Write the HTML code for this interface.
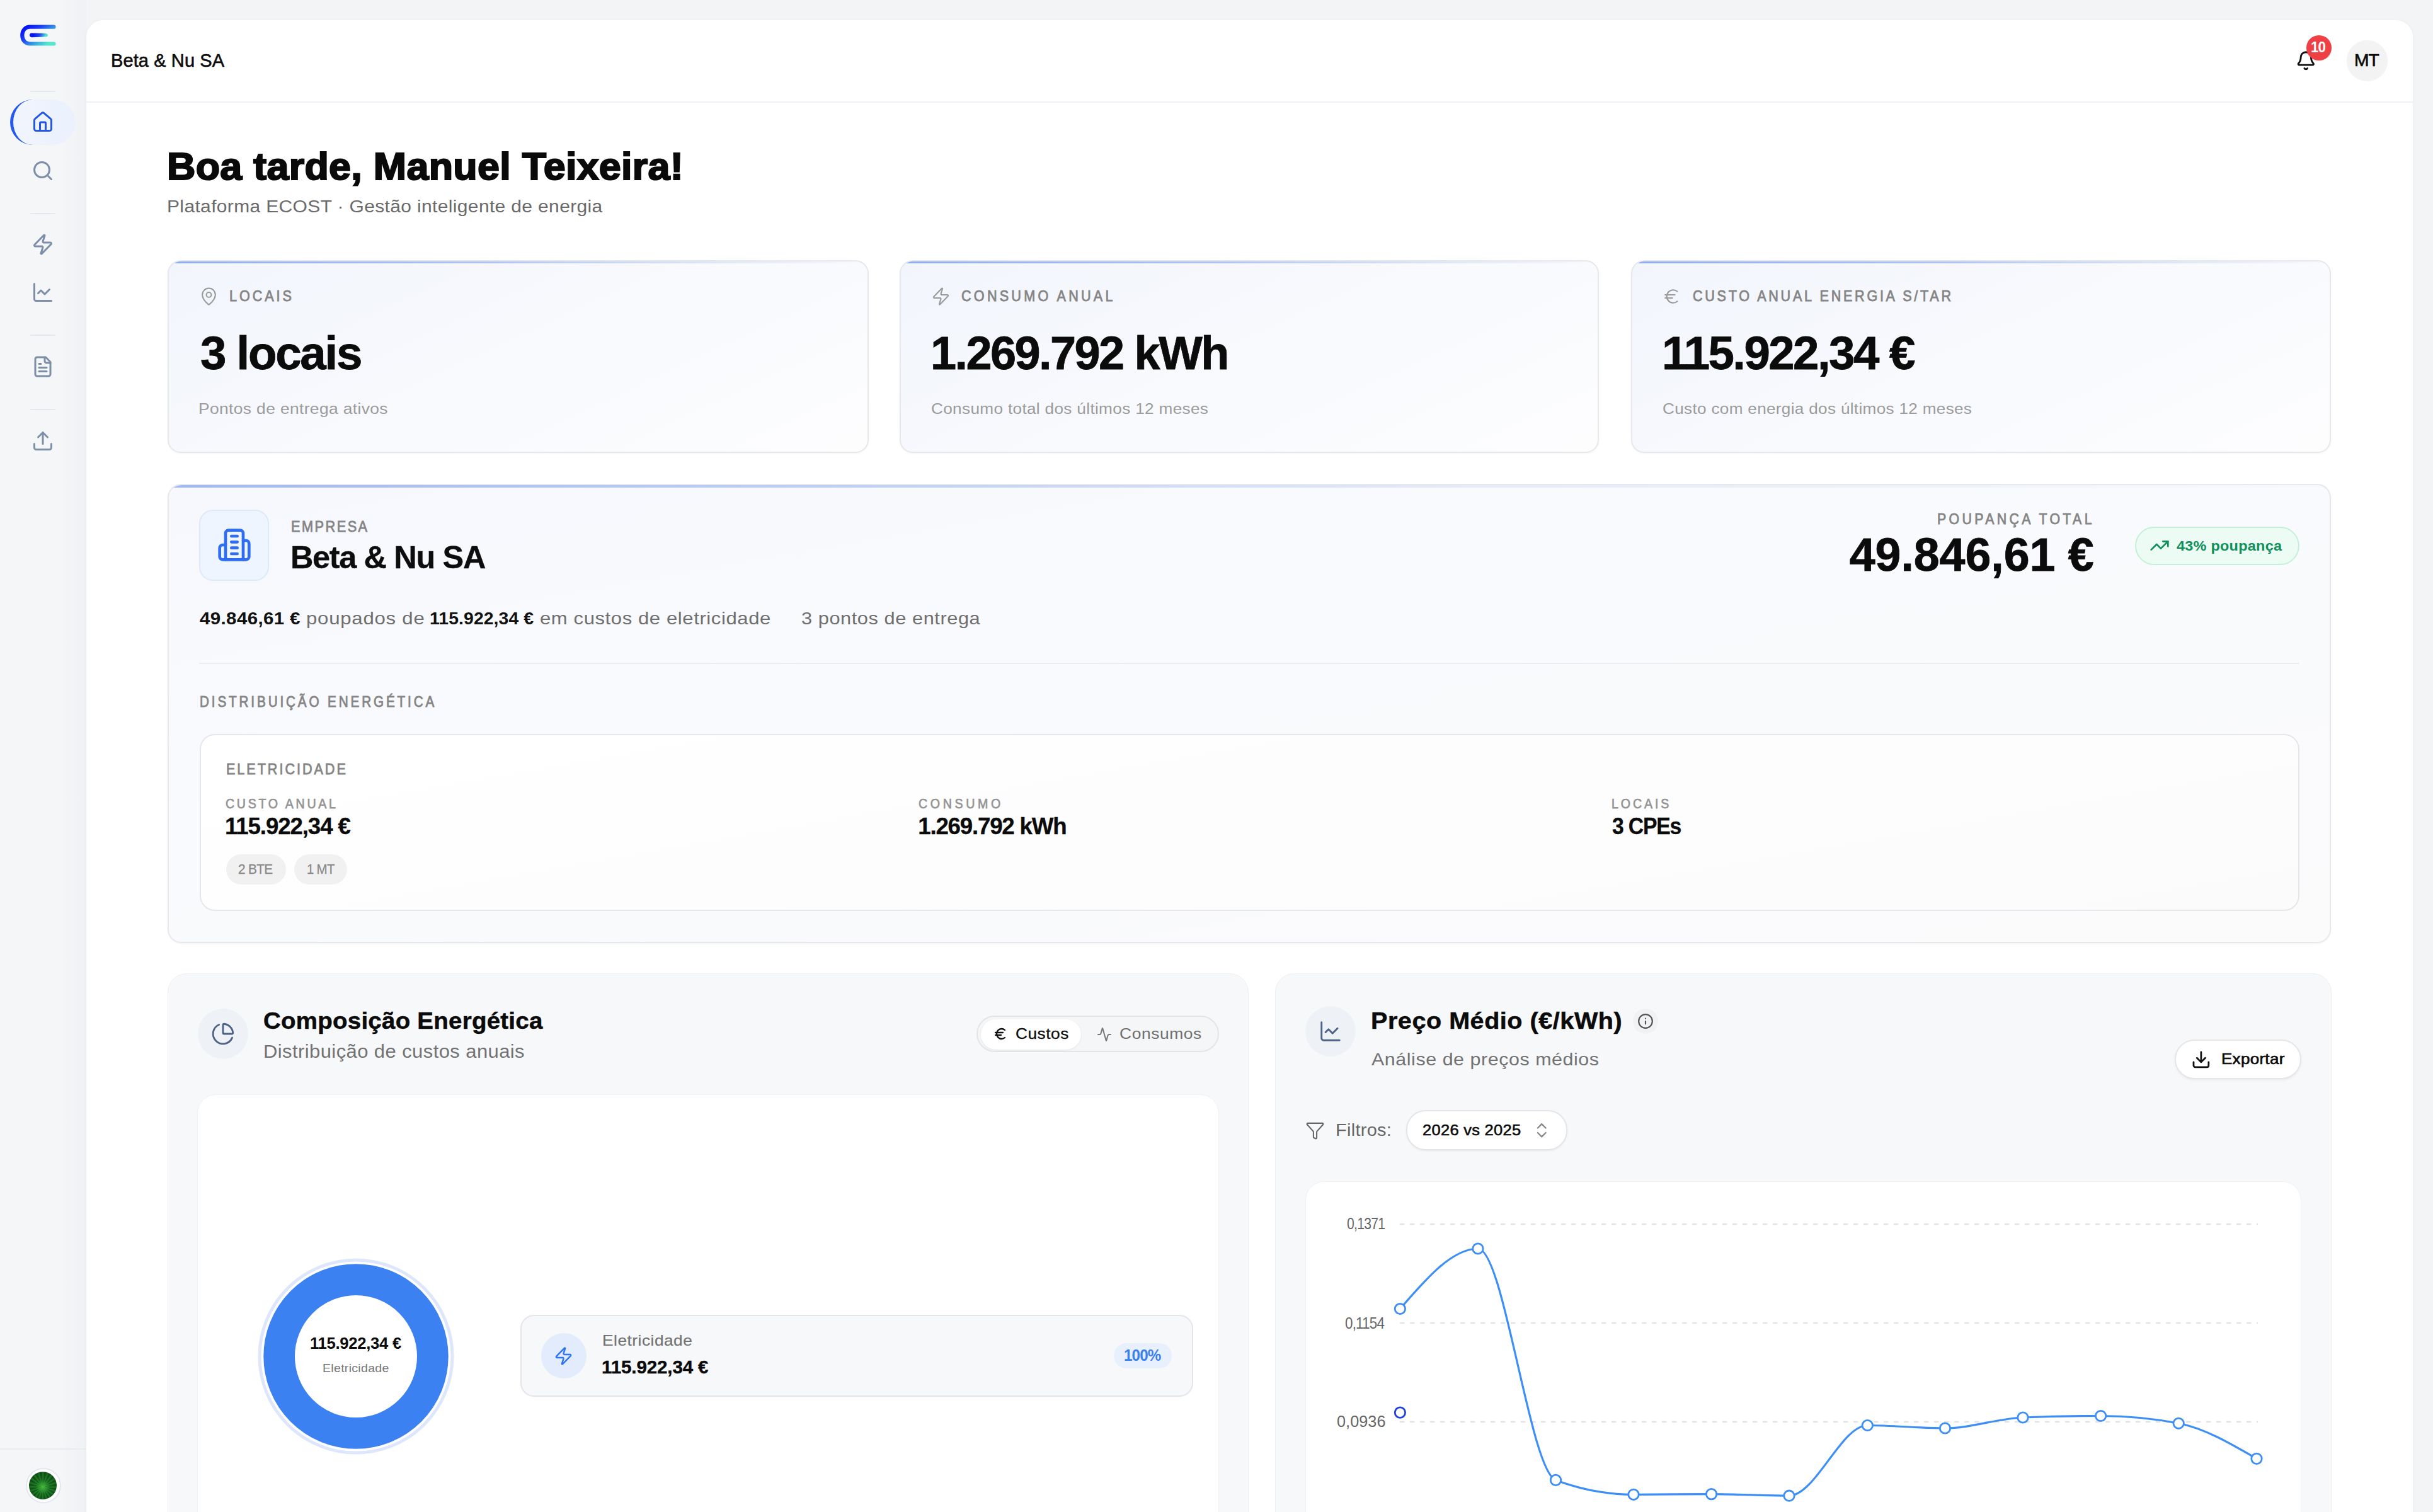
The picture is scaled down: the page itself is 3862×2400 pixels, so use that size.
<!DOCTYPE html>
<html><head><meta charset="utf-8"><title>ECOST</title>
<style>
@media (min-width:1900px) and (max-width:1960px){html{zoom:0.5;}}
html,body{margin:0;padding:0;}
body{width:3862px;height:2400px;overflow:hidden;background:#f3f4f6;font-family:"Liberation Sans",sans-serif;position:relative;}
.b{position:absolute;}
.ic{position:absolute;overflow:visible;}
.t{position:absolute;white-space:nowrap;}
</style></head><body>
<div class="b" style="left:0.0px;top:0.0px;width:136.5px;height:2400.0px;background:linear-gradient(90deg,#f5f6f8 0%,#f5f6f8 70%,#f0f1f4 100%);"></div>
<svg class="ic" style="left:0;top:0;width:136px;height:100px" viewBox="0 0 136 100">
<defs><linearGradient id="lg1" gradientUnits="userSpaceOnUse" x1="45" y1="40" x2="70" y2="74"><stop offset="0" stop-color="#0514f8"/><stop offset="0.3" stop-color="#1a3af6"/><stop offset="0.7" stop-color="#3aa4e2"/><stop offset="1" stop-color="#55e6d0"/></linearGradient>
<linearGradient id="lg2" gradientUnits="userSpaceOnUse" x1="55" y1="52" x2="70" y2="61"><stop offset="0" stop-color="#0514f8"/><stop offset="0.5" stop-color="#1f45f4"/><stop offset="1" stop-color="#55e6d0"/></linearGradient></defs>
<path d="M85.5 42.7 H48 C39 42.7 35.3 49.5 35.3 56 C35.3 62.5 39 69.5 48 69.5 H85.5" fill="none" stroke="url(#lg1)" stroke-width="6.2" stroke-linecap="round"/>
<path d="M50 52.6 L73 53.2 C77 53.6 77 58.2 73 58.6 L50 59.2 C46 59.2 46 52.6 50 52.6 Z" fill="url(#lg2)"/>
</svg>
<div class="b" style="left:48.0px;top:144.0px;width:40.0px;height:2.0px;background:#e4e8ee;border-radius:1px;"></div>
<div class="b" style="left:48.0px;top:337.6px;width:40.0px;height:2.0px;background:#e4e8ee;border-radius:1px;"></div>
<div class="b" style="left:48.0px;top:531.0px;width:40.0px;height:2.0px;background:#e4e8ee;border-radius:1px;"></div>
<div class="b" style="left:48.0px;top:649.0px;width:40.0px;height:2.0px;background:#e4e8ee;border-radius:1px;"></div>
<div class="b" style="left:16.0px;top:158.0px;width:104.0px;height:72.0px;background:linear-gradient(90deg,#f1f5fd,#eaf1fd);border-radius:36px;"></div>
<div class="b" style="left:16px;top:158px;width:72px;height:72px;border-radius:50%;border-left:5px solid #2458f0;box-sizing:border-box;clip-path:inset(0 50% 0 0);"></div>
<svg class="ic" style="left:50.0px;top:176.0px;width:36.0px;height:36.0px;" viewBox="0 0 24 24" fill="none" stroke="#2456e8" stroke-width="2" stroke-linecap="round" stroke-linejoin="round"><path d="M15 21v-8a1 1 0 0 0-1-1h-4a1 1 0 0 0-1 1v8"/><path d="M3 10a2 2 0 0 1 .709-1.528l7-5.999a2 2 0 0 1 2.582 0l7 5.999A2 2 0 0 1 21 10v9a2 2 0 0 1-2 2H5a2 2 0 0 1-2-2z"/></svg>
<svg class="ic" style="left:50.0px;top:252.5px;width:36.0px;height:36.0px;" viewBox="0 0 24 24" fill="none" stroke="#7d8ea8" stroke-width="2" stroke-linecap="round" stroke-linejoin="round"><circle cx="11" cy="11" r="8"/><path d="m21 21-4.3-4.3"/></svg>
<svg class="ic" style="left:50.0px;top:370.0px;width:36.0px;height:36.0px;" viewBox="0 0 24 24" fill="none" stroke="#7d8ea8" stroke-width="2" stroke-linecap="round" stroke-linejoin="round"><path d="M4 14a1 1 0 0 1-.78-1.63l9.9-10.2a.5.5 0 0 1 .86.46l-1.92 6.02A1 1 0 0 0 13 10h7a1 1 0 0 1 .78 1.63l-9.9 10.2a.5.5 0 0 1-.86-.46l1.92-6.02A1 1 0 0 0 11 14z"/></svg>
<svg class="ic" style="left:50.0px;top:445.5px;width:36.0px;height:36.0px;" viewBox="0 0 24 24" fill="none" stroke="#7d8ea8" stroke-width="2" stroke-linecap="round" stroke-linejoin="round"><path d="M3 3v16a2 2 0 0 0 2 2h16"/><path d="m19 9-5 5-4-4-3 3"/></svg>
<svg class="ic" style="left:50.0px;top:564.0px;width:36.0px;height:36.0px;" viewBox="0 0 24 24" fill="none" stroke="#7d8ea8" stroke-width="2" stroke-linecap="round" stroke-linejoin="round"><path d="M15 2H6a2 2 0 0 0-2 2v16a2 2 0 0 0 2 2h12a2 2 0 0 0 2-2V7Z"/><path d="M14 2v4a2 2 0 0 0 2 2h4"/><path d="M10 9H8"/><path d="M16 13H8"/><path d="M16 17H8"/></svg>
<svg class="ic" style="left:50.0px;top:682.0px;width:36.0px;height:36.0px;" viewBox="0 0 24 24" fill="none" stroke="#7d8ea8" stroke-width="2" stroke-linecap="round" stroke-linejoin="round"><path d="M21 15v4a2 2 0 0 1-2 2H5a2 2 0 0 1-2-2v-4"/><polyline points="17 8 12 3 7 8"/><line x1="12" x2="12" y1="3" y2="15"/></svg>
<div class="b" style="left:0.0px;top:2299.0px;width:136.5px;height:2.0px;background:#e8ebf0;"></div>
<div class="b" style="left:40.5px;top:2330px;width:56px;height:56px;border-radius:50%;background:#fff;border:2px solid #e3e8f0;box-sizing:border-box;"></div>
<div class="b" style="left:46.4px;top:2335.8px;width:44px;height:44px;border-radius:50%;background:radial-gradient(circle at 50% 55%,rgba(80,210,70,0.8) 0%,rgba(30,130,40,0.45) 35%,rgba(5,40,10,0.5) 100%),repeating-conic-gradient(from 10deg at 50% 55%,#0a3d10 0deg,#24882a 9deg,#072c0b 18deg),#0b4a12;"></div>
<div class="b" style="left:136.5px;top:32.0px;width:3693.5px;height:2428.0px;background:#fff;border-radius:27px;box-shadow:0 0 6px rgba(0,0,0,0.03);"></div>
<div class="b" style="left:136.5px;top:160.5px;width:3693.5px;height:2.0px;background:#eef2f8;"></div>
<div class="t " style="left:176.47px;top:81.95px;font-size:28.60px;line-height:28.60px;font-weight:400;color:#0d0d0d;letter-spacing:0.098px;-webkit-text-stroke:0.6px #0d0d0d;transform:scaleX(1.0146);transform-origin:0 0;">Beta &amp; Nu SA</div>
<svg class="ic" style="left:3644.4px;top:79.7px;width:32.6px;height:32.6px;" viewBox="0 0 24 24" fill="none" stroke="#111" stroke-width="2.1" stroke-linecap="round" stroke-linejoin="round"><path d="M10.268 21a2 2 0 0 0 3.464 0"/><path d="M3.262 15.326A1 1 0 0 0 4 17h16a1 1 0 0 0 .74-1.673C19.41 13.956 18 12.499 18 8A6 6 0 0 0 6 8c0 4.499-1.411 5.956-2.738 7.326"/></svg>
<div class="b" style="left:3660.7px;top:56.1px;width:40.2px;height:40.2px;border-radius:50%;background:#ef4046;box-shadow:0 1px 3px rgba(0,0,0,0.08);"></div>
<div class="t " style="left:3668.19px;top:63.25px;font-size:24.50px;line-height:24.50px;font-weight:700;color:#fff;letter-spacing:-0.858px;transform:scaleX(0.9084);transform-origin:0 0;">10</div>
<div class="b" style="left:3725.4px;top:64.4px;width:64.2px;height:64.2px;border-radius:50%;background:#f3f3f3;"></div>
<div class="t " style="left:3736.70px;top:81.35px;font-size:28.30px;line-height:28.30px;font-weight:400;color:#0d0d0d;letter-spacing:-0.991px;-webkit-text-stroke:0.7px #0d0d0d;transform:scaleX(0.9978);transform-origin:0 0;">MT</div>
<div class="t " style="left:265.31px;top:232.75px;font-size:61.50px;line-height:61.50px;font-weight:700;color:#0a0a0a;letter-spacing:0.274px;-webkit-text-stroke:2.2px #0a0a0a;transform:scaleX(1.0217);transform-origin:0 0;">Boa tarde, Manuel Teixeira!</div>
<div class="t " style="left:265.17px;top:313.30px;font-size:28.20px;line-height:28.20px;font-weight:400;color:#6a6a6a;letter-spacing:0.343px;transform:scaleX(1.0632);transform-origin:0 0;">Plataforma ECOST · Gestão inteligente de energia</div>
<div class="b" style="left:266px;top:413px;width:1113px;height:306px;background:linear-gradient(155deg,#f2f5fc 0%,#f7f9fd 45%,#fdfdfe 100%);border:2px solid #e7e8eb;border-radius:21px;box-sizing:border-box;box-shadow:0 1px 3px rgba(0,0,0,0.05);overflow:hidden;"><div style="position:absolute;left:0;right:0;top:0;height:3.2px;background:linear-gradient(90deg,#8eadf1 0%,#aec3f3 45%,rgba(215,225,247,0.7) 80%,rgba(240,244,252,0) 100%);"></div></div>
<svg class="ic" style="left:316.3px;top:454.7px;width:31.0px;height:31.0px;" viewBox="0 0 24 24" fill="none" stroke="#9a9a9a" stroke-width="1.6" stroke-linecap="round" stroke-linejoin="round"><path d="M20 10c0 4.993-5.539 10.193-7.399 11.799a1 1 0 0 1-1.202 0C9.539 20.193 4 14.993 4 10a8 8 0 0 1 16 0"/><circle cx="12" cy="10" r="3"/></svg>
<div class="t " style="left:364.40px;top:457.90px;font-size:24.00px;line-height:24.00px;font-weight:400;color:#858585;letter-spacing:4.351px;-webkit-text-stroke:0.85px #858585;transform:scaleX(0.9000);transform-origin:0 0;">LOCAIS</div>
<div class="t " style="left:317.90px;top:524.05px;font-size:74.50px;line-height:74.50px;font-weight:700;color:#0b0b0b;letter-spacing:-2.272px;-webkit-text-stroke:0.8px #0b0b0b;">3 locais</div>
<div class="t " style="left:315.26px;top:636.55px;font-size:24.70px;line-height:24.70px;font-weight:400;color:#9b9b9b;letter-spacing:0.332px;transform:scaleX(1.0704);transform-origin:0 0;">Pontos de entrega ativos</div>
<div class="b" style="left:1428px;top:413px;width:1110px;height:306px;background:linear-gradient(155deg,#f2f5fc 0%,#f7f9fd 45%,#fdfdfe 100%);border:2px solid #e7e8eb;border-radius:21px;box-sizing:border-box;box-shadow:0 1px 3px rgba(0,0,0,0.05);overflow:hidden;"><div style="position:absolute;left:0;right:0;top:0;height:3.2px;background:linear-gradient(90deg,#8eadf1 0%,#aec3f3 45%,rgba(215,225,247,0.7) 80%,rgba(240,244,252,0) 100%);"></div></div>
<svg class="ic" style="left:1477.5px;top:454.7px;width:31.0px;height:31.0px;" viewBox="0 0 24 24" fill="none" stroke="#9a9a9a" stroke-width="1.6" stroke-linecap="round" stroke-linejoin="round"><path d="M4 14a1 1 0 0 1-.78-1.63l9.9-10.2a.5.5 0 0 1 .86.46l-1.92 6.02A1 1 0 0 0 13 10h7a1 1 0 0 1 .78 1.63l-9.9 10.2a.5.5 0 0 1-.86-.46l1.92-6.02A1 1 0 0 0 11 14z"/></svg>
<div class="t " style="left:1526.40px;top:457.90px;font-size:24.00px;line-height:24.00px;font-weight:400;color:#858585;letter-spacing:4.712px;-webkit-text-stroke:0.85px #858585;transform:scaleX(0.9000);transform-origin:0 0;">CONSUMO ANUAL</div>
<div class="t " style="left:1476.93px;top:524.05px;font-size:74.50px;line-height:74.50px;font-weight:700;color:#0b0b0b;letter-spacing:-2.608px;-webkit-text-stroke:0.8px #0b0b0b;transform:scaleX(0.9924);transform-origin:0 0;">1.269.792 kWh</div>
<div class="t " style="left:1478.34px;top:636.55px;font-size:24.70px;line-height:24.70px;font-weight:400;color:#9b9b9b;letter-spacing:0.300px;transform:scaleX(1.0608);transform-origin:0 0;">Consumo total dos últimos 12 meses</div>
<div class="b" style="left:2589px;top:413px;width:1111px;height:306px;background:linear-gradient(155deg,#f2f5fc 0%,#f7f9fd 45%,#fdfdfe 100%);border:2px solid #e7e8eb;border-radius:21px;box-sizing:border-box;box-shadow:0 1px 3px rgba(0,0,0,0.05);overflow:hidden;"><div style="position:absolute;left:0;right:0;top:0;height:3.2px;background:linear-gradient(90deg,#8eadf1 0%,#aec3f3 45%,rgba(215,225,247,0.7) 80%,rgba(240,244,252,0) 100%);"></div></div>
<svg class="ic" style="left:2637.5px;top:454.7px;width:31.0px;height:31.0px;" viewBox="0 0 24 24" fill="none" stroke="#9a9a9a" stroke-width="1.6" stroke-linecap="round" stroke-linejoin="round"><path d="M4 10h12"/><path d="M4 14h9"/><path d="M19 6a7.7 7.7 0 0 0-5.2-2A7.9 7.9 0 0 0 6 12c0 4.4 3.5 8 7.8 8 2 0 3.8-.8 5.2-2"/></svg>
<div class="t " style="left:2687.40px;top:457.90px;font-size:24.00px;line-height:24.00px;font-weight:400;color:#858585;letter-spacing:4.108px;-webkit-text-stroke:0.85px #858585;transform:scaleX(0.9000);transform-origin:0 0;">CUSTO ANUAL ENERGIA S/TAR</div>
<div class="t " style="left:2637.90px;top:524.05px;font-size:74.50px;line-height:74.50px;font-weight:700;color:#0b0b0b;letter-spacing:-2.587px;-webkit-text-stroke:0.8px #0b0b0b;">115.922,34 €</div>
<div class="t " style="left:2639.34px;top:636.55px;font-size:24.70px;line-height:24.70px;font-weight:400;color:#9b9b9b;letter-spacing:0.291px;transform:scaleX(1.0590);transform-origin:0 0;">Custo com energia dos últimos 12 meses</div>
<div class="b" style="left:266px;top:768px;width:3434px;height:728.5px;background:linear-gradient(170deg,#f6f8fd 0%,#f9fafd 40%,#fbfbfc 100%);border:2px solid #e7e8eb;border-radius:22px;box-sizing:border-box;box-shadow:0 1px 3px rgba(0,0,0,0.05);overflow:hidden;"><div style="position:absolute;left:0;right:0;top:0;height:4px;background:linear-gradient(90deg,#a0baf2 0%,#c3d3f5 35%,rgba(220,229,248,0.7) 60%,rgba(240,244,252,0.2) 100%);"></div></div>
<div class="b" style="left:316.0px;top:809.0px;width:111.0px;height:112.5px;background:#eef5fe;border:2px solid #dde9fb;border-radius:22px;box-sizing:border-box;"></div>
<svg class="ic" style="left:343.5px;top:837.0px;width:56.0px;height:56.0px;" viewBox="0 0 24 24" fill="none" stroke="#2f6df2" stroke-width="2" stroke-linecap="round" stroke-linejoin="round"><path d="M6 22V4a2 2 0 0 1 2-2h8a2 2 0 0 1 2 2v18Z"/><path d="M6 12H4a2 2 0 0 0-2 2v6a2 2 0 0 0 2 2h2"/><path d="M18 9h2a2 2 0 0 1 2 2v9a2 2 0 0 1-2 2h-2"/><path d="M10 6h4"/><path d="M10 10h4"/><path d="M10 14h4"/><path d="M10 18h4"/></svg>
<div class="t " style="left:461.50px;top:823.80px;font-size:24.20px;line-height:24.20px;font-weight:400;color:#858585;letter-spacing:2.716px;-webkit-text-stroke:0.85px #858585;transform:scaleX(0.9000);transform-origin:0 0;">EMPRESA</div>
<div class="t " style="left:460.90px;top:859.75px;font-size:50.50px;line-height:50.50px;font-weight:700;color:#0d0d0d;letter-spacing:-1.365px;-webkit-text-stroke:0.3px #0d0d0d;">Beta &amp; Nu SA</div>
<div class="t " style="left:316.90px;top:967.70px;font-size:28.00px;line-height:28.00px;font-weight:700;color:#111;letter-spacing:0.331px;transform:scaleX(1.0550);transform-origin:0 0;">49.846,61 €</div>
<div class="t " style="left:486.39px;top:967.70px;font-size:28.00px;line-height:28.00px;font-weight:400;color:#6f6f6f;letter-spacing:0.692px;transform:scaleX(1.1119);transform-origin:0 0;">poupados de</div>
<div class="t " style="left:682.49px;top:967.70px;font-size:28.00px;line-height:28.00px;font-weight:700;color:#111;letter-spacing:0.084px;transform:scaleX(1.0136);transform-origin:0 0;">115.922,34 €</div>
<div class="t " style="left:857.39px;top:967.70px;font-size:28.00px;line-height:28.00px;font-weight:400;color:#6f6f6f;letter-spacing:0.548px;transform:scaleX(1.1076);transform-origin:0 0;">em custos de eletricidade</div>
<div class="t " style="left:1272.40px;top:967.70px;font-size:28.00px;line-height:28.00px;font-weight:400;color:#6f6f6f;letter-spacing:0.524px;transform:scaleX(1.0971);transform-origin:0 0;">3 pontos de entrega</div>
<div class="t " style="left:3075.10px;top:812.55px;font-size:23.70px;line-height:23.70px;font-weight:400;color:#858585;letter-spacing:4.815px;-webkit-text-stroke:0.85px #858585;transform:scaleX(0.9000);transform-origin:0 0;">POUPANÇA TOTAL</div>
<div class="t " style="left:2935.70px;top:844.30px;font-size:73.60px;line-height:73.60px;font-weight:700;color:#0b0b0b;letter-spacing:-0.085px;-webkit-text-stroke:0.8px #0b0b0b;">49.846,61 €</div>
<div class="b" style="left:3389.0px;top:836.0px;width:261.0px;height:61.0px;background:#ecfbf3;border:2px solid #c5f0d8;border-radius:31px;box-sizing:border-box;"></div>
<svg class="ic" style="left:3412.3px;top:850.3px;width:32.0px;height:32.0px;" viewBox="0 0 24 24" fill="none" stroke="#0f8f5a" stroke-width="2" stroke-linecap="round" stroke-linejoin="round"><polyline points="22 7 13.5 15.5 8.5 10.5 2 17"/><polyline points="16 7 22 7 22 13"/></svg>
<div class="t " style="left:3455.40px;top:855.55px;font-size:22.50px;line-height:22.50px;font-weight:700;color:#0f8f5a;letter-spacing:0.248px;transform:scaleX(1.0419);transform-origin:0 0;">43% poupança</div>
<div class="b" style="left:316.0px;top:1052.0px;width:3334.0px;height:2.0px;background:#ebedf0;"></div>
<div class="t " style="left:316.60px;top:1102.50px;font-size:23.00px;line-height:23.00px;font-weight:400;color:#858585;letter-spacing:4.281px;-webkit-text-stroke:0.85px #858585;transform:scaleX(0.9000);transform-origin:0 0;">DISTRIBUIÇÃO ENERGÉTICA</div>
<div class="b" style="left:316.6px;top:1165.0px;width:3333.4px;height:281.0px;background:linear-gradient(170deg,#ffffff 0%,#fbfbfc 100%);border:2px solid #e6e7ea;border-radius:24px;box-sizing:border-box;"></div>
<div class="t " style="left:358.70px;top:1208.50px;font-size:24.00px;line-height:24.00px;font-weight:400;color:#858585;letter-spacing:3.290px;-webkit-text-stroke:0.85px #858585;transform:scaleX(0.9000);transform-origin:0 0;">ELETRICIDADE</div>
<div class="t " style="left:358.10px;top:1264.90px;font-size:21.80px;line-height:21.80px;font-weight:400;color:#949494;letter-spacing:4.093px;-webkit-text-stroke:0.75px #949494;transform:scaleX(0.9000);transform-origin:0 0;">CUSTO ANUAL</div>
<div class="t " style="left:357.00px;top:1294.35px;font-size:36.70px;line-height:36.70px;font-weight:700;color:#0b0b0b;letter-spacing:-1.117px;-webkit-text-stroke:0.3px #0b0b0b;">115.922,34 €</div>
<div class="t " style="left:1458.30px;top:1264.90px;font-size:21.80px;line-height:21.80px;font-weight:400;color:#949494;letter-spacing:5.151px;-webkit-text-stroke:0.75px #949494;transform:scaleX(0.9000);transform-origin:0 0;">CONSUMO</div>
<div class="t " style="left:1457.20px;top:1294.35px;font-size:36.70px;line-height:36.70px;font-weight:700;color:#0b0b0b;letter-spacing:-1.203px;-webkit-text-stroke:0.3px #0b0b0b;">1.269.792 kWh</div>
<div class="t " style="left:2557.60px;top:1264.90px;font-size:21.80px;line-height:21.80px;font-weight:400;color:#949494;letter-spacing:4.318px;-webkit-text-stroke:0.75px #949494;transform:scaleX(0.9000);transform-origin:0 0;">LOCAIS</div>
<div class="t " style="left:2558.50px;top:1294.35px;font-size:36.70px;line-height:36.70px;font-weight:700;color:#0b0b0b;letter-spacing:-1.285px;-webkit-text-stroke:0.3px #0b0b0b;transform:scaleX(0.9190);transform-origin:0 0;">3 CPEs</div>
<div class="b" style="left:359.0px;top:1356.0px;width:94.5px;height:48.0px;background:#f1f1f2;border-radius:24px;"></div>
<div class="b" style="left:467.0px;top:1356.0px;width:84.3px;height:48.0px;background:#f1f1f2;border-radius:24px;"></div>
<div class="t " style="left:377.85px;top:1368.95px;font-size:22.10px;line-height:22.10px;font-weight:400;color:#8a8a8a;letter-spacing:-0.774px;-webkit-text-stroke:0.3px #8a8a8a;transform:scaleX(0.9458);transform-origin:0 0;">2 BTE</div>
<div class="t " style="left:486.58px;top:1368.95px;font-size:22.10px;line-height:22.10px;font-weight:400;color:#8a8a8a;letter-spacing:-0.774px;-webkit-text-stroke:0.3px #8a8a8a;transform:scaleX(0.9245);transform-origin:0 0;">1 MT</div>
<div class="b" style="left:266.0px;top:1545.0px;width:1716.4px;height:955.0px;background:#f7f8fa;border:1.5px solid #edeff2;box-sizing:border-box;border-radius:30px;"></div>
<div class="b" style="left:314px;top:1601px;width:80px;height:80px;border-radius:50%;background:#eef2f7;"></div>
<svg class="ic" style="left:335.0px;top:1622.0px;width:38.0px;height:38.0px;" viewBox="0 0 24 24" fill="none" stroke="#4c6286" stroke-width="1.8" stroke-linecap="round" stroke-linejoin="round"><path d="M21 12c.552 0 1.005-.449.95-.998a10 10 0 0 0-8.953-8.951c-.55-.055-.998.398-.998.95v8a1 1 0 0 0 1 1z"/><path d="M21.21 15.89A10 10 0 1 1 8 2.83"/></svg>
<div class="t " style="left:418.17px;top:1601.55px;font-size:37.50px;line-height:37.50px;font-weight:700;color:#0b0b0b;letter-spacing:0.236px;-webkit-text-stroke:0.5px #0b0b0b;transform:scaleX(1.0265);transform-origin:0 0;">Composição Energética</div>
<div class="t " style="left:418.35px;top:1654.85px;font-size:28.90px;line-height:28.90px;font-weight:400;color:#727272;letter-spacing:0.386px;transform:scaleX(1.0725);transform-origin:0 0;">Distribuição de custos anuais</div>
<div class="b" style="left:1550.0px;top:1612.0px;width:384.6px;height:58.4px;background:#f5f6f8;border:2px solid #e4e5e8;border-radius:30px;box-sizing:border-box;"></div>
<div class="b" style="left:1556.5px;top:1617.6px;width:159.3px;height:48.4px;background:#fff;border-radius:25px;box-shadow:0 1px 3px rgba(0,0,0,0.08);"></div>
<svg class="ic" style="left:1575.5px;top:1629.2px;width:24.0px;height:24.0px;" viewBox="0 0 24 24" fill="none" stroke="#111" stroke-width="2.3" stroke-linecap="round" stroke-linejoin="round"><path d="M4 10h12"/><path d="M4 14h9"/><path d="M19 6a7.7 7.7 0 0 0-5.2-2A7.9 7.9 0 0 0 6 12c0 4.4 3.5 8 7.8 8 2 0 3.8-.8 5.2-2"/></svg>
<div class="t " style="left:1612.12px;top:1628.50px;font-size:24.40px;line-height:24.40px;font-weight:400;color:#0d0d0d;letter-spacing:0.461px;-webkit-text-stroke:0.3px #0d0d0d;transform:scaleX(1.0776);transform-origin:0 0;">Custos</div>
<svg class="ic" style="left:1741.0px;top:1629.5px;width:24.0px;height:24.0px;" viewBox="0 0 24 24" fill="none" stroke="#777" stroke-width="2" stroke-linecap="round" stroke-linejoin="round"><path d="M22 12h-2.48a2 2 0 0 0-1.93 1.46l-2.35 8.36a.25.25 0 0 1-.48 0L9.24 2.18a.25.25 0 0 0-.48 0l-2.35 8.36A2 2 0 0 1 4.49 12H2"/></svg>
<div class="t " style="left:1777.42px;top:1628.50px;font-size:24.40px;line-height:24.40px;font-weight:400;color:#6f6f6f;letter-spacing:0.539px;transform:scaleX(1.0826);transform-origin:0 0;">Consumos</div>
<div class="b" style="left:313.0px;top:1737.3px;width:1622.0px;height:762.7px;background:#fff;border:1px solid #f0f1f4;box-sizing:border-box;border-radius:30px;"></div>
<svg class="ic" style="left:400px;top:1987.5px;width:330px;height:330px" viewBox="0 0 330 330"><circle cx="165" cy="165" r="153" fill="none" stroke="#dde6fb" stroke-width="5"/><circle cx="165" cy="165" r="121.85" fill="none" stroke="#3c81f1" stroke-width="49.7"/></svg>
<div class="t " style="left:491.90px;top:2120.35px;font-size:25.70px;line-height:25.70px;font-weight:700;color:#0b0b0b;letter-spacing:-0.298px;">115.922,34 €</div>
<div class="t " style="left:511.92px;top:2163.30px;font-size:18.20px;line-height:18.20px;font-weight:400;color:#777;letter-spacing:0.260px;transform:scaleX(1.0766);transform-origin:0 0;">Eletricidade</div>
<div class="b" style="left:826.0px;top:2087.4px;width:1068.2px;height:129.6px;background:#f7f8fa;border:2px solid #e3e5e9;border-radius:22px;box-sizing:border-box;box-shadow:0 1px 2px rgba(0,0,0,0.03);"></div>
<div class="b" style="left:859px;top:2116px;width:72px;height:72px;border-radius:50%;background:#e3ecfc;"></div>
<svg class="ic" style="left:879.0px;top:2136.5px;width:31.0px;height:31.0px;" viewBox="0 0 24 24" fill="none" stroke="#2f73f2" stroke-width="1.9" stroke-linecap="round" stroke-linejoin="round"><path d="M4 14a1 1 0 0 1-.78-1.63l9.9-10.2a.5.5 0 0 1 .86.46l-1.92 6.02A1 1 0 0 0 13 10h7a1 1 0 0 1 .78 1.63l-9.9 10.2a.5.5 0 0 1-.86-.46l1.92-6.02A1 1 0 0 0 11 14z"/></svg>
<div class="t " style="left:956.00px;top:2115.50px;font-size:23.80px;line-height:23.80px;font-weight:400;color:#727272;letter-spacing:0.454px;-webkit-text-stroke:0.2px #727272;transform:scaleX(1.1046);transform-origin:0 0;">Eletricidade</div>
<div class="t " style="left:955.10px;top:2154.80px;font-size:29.60px;line-height:29.60px;font-weight:700;color:#0b0b0b;letter-spacing:-0.155px;-webkit-text-stroke:0.4px #0b0b0b;">115.922,34 €</div>
<div class="b" style="left:1768.0px;top:2132.3px;width:92.0px;height:40.2px;background:#e8f0fd;border-radius:20px;"></div>
<div class="t " style="left:1784.16px;top:2138.50px;font-size:25.60px;line-height:25.60px;font-weight:700;color:#3a7ff0;letter-spacing:-0.896px;transform:scaleX(0.9433);transform-origin:0 0;">100%</div>
<div class="b" style="left:2023.7px;top:1545.0px;width:1676.9px;height:955.0px;background:#f7f8fa;border:1.5px solid #edeff2;box-sizing:border-box;border-radius:30px;"></div>
<div class="b" style="left:2072px;top:1597px;width:80px;height:80px;border-radius:50%;background:#eef2f7;"></div>
<svg class="ic" style="left:2093.0px;top:1618.0px;width:38.0px;height:38.0px;" viewBox="0 0 24 24" fill="none" stroke="#4c6286" stroke-width="1.8" stroke-linecap="round" stroke-linejoin="round"><path d="M3 3v16a2 2 0 0 0 2 2h16"/><path d="m19 9-5 5-4-4-3 3"/></svg>
<div class="t " style="left:2176.18px;top:1601.55px;font-size:37.30px;line-height:37.30px;font-weight:700;color:#0b0b0b;letter-spacing:0.497px;-webkit-text-stroke:0.5px #0b0b0b;transform:scaleX(1.0609);transform-origin:0 0;">Preço Médio (€/kWh)</div>
<div class="b" style="left:2591.6px;top:1601.3px;width:40px;height:40px;border-radius:50%;background:#f1f2f4;"></div>
<svg class="ic" style="left:2598.6px;top:1608.3px;width:26.0px;height:26.0px;" viewBox="0 0 24 24" fill="none" stroke="#555" stroke-width="2" stroke-linecap="round" stroke-linejoin="round"><circle cx="12" cy="12" r="10"/><path d="M12 16v-4"/><path d="M12 8h.01"/></svg>
<div class="t " style="left:2177.30px;top:1667.80px;font-size:27.80px;line-height:27.80px;font-weight:400;color:#727272;letter-spacing:0.508px;transform:scaleX(1.0940);transform-origin:0 0;">Análise de preços médios</div>
<div class="b" style="left:3451.5px;top:1649.5px;width:201.0px;height:63.5px;background:#fff;border:2px solid #e6e6e8;border-radius:32px;box-sizing:border-box;box-shadow:0 2px 4px rgba(0,0,0,0.05);"></div>
<svg class="ic" style="left:3477.8px;top:1665.8px;width:31.8px;height:31.8px;" viewBox="0 0 24 24" fill="none" stroke="#111" stroke-width="2.1" stroke-linecap="round" stroke-linejoin="round"><path d="M21 15v4a2 2 0 0 1-2 2H5a2 2 0 0 1-2-2v-4"/><polyline points="7 10 12 15 17 10"/><line x1="12" x2="12" y1="15" y2="3"/></svg>
<div class="t " style="left:3525.58px;top:1668.85px;font-size:24.50px;line-height:24.50px;font-weight:400;color:#0d0d0d;letter-spacing:0.306px;-webkit-text-stroke:0.7px #0d0d0d;transform:scaleX(1.0586);transform-origin:0 0;">Exportar</div>
<svg class="ic" style="left:2072.3px;top:1778.9px;width:31.0px;height:31.0px;" viewBox="0 0 24 24" fill="none" stroke="#666" stroke-width="1.6" stroke-linecap="round" stroke-linejoin="round"><path d="M10 20a1 1 0 0 0 .553.895l2 1A1 1 0 0 0 14 21v-7a2 2 0 0 1 .517-1.341L21.74 4.67A1 1 0 0 0 21 3H3a1 1 0 0 0-.742 1.67l7.225 7.989A2 2 0 0 1 10 14z"/></svg>
<div class="t " style="left:2119.88px;top:1780.35px;font-size:27.30px;line-height:27.30px;font-weight:400;color:#666;letter-spacing:0.271px;transform:scaleX(1.0598);transform-origin:0 0;">Filtros:</div>
<div class="b" style="left:2231.8px;top:1762.0px;width:256.5px;height:64.0px;background:#fff;border:2px solid #e5e6e9;border-radius:31px;box-sizing:border-box;box-shadow:0 1px 3px rgba(0,0,0,0.06);"></div>
<div class="t " style="left:2257.55px;top:1782.15px;font-size:24.30px;line-height:24.30px;font-weight:400;color:#0d0d0d;letter-spacing:0.265px;-webkit-text-stroke:0.6px #0d0d0d;transform:scaleX(1.0495);transform-origin:0 0;">2026 vs 2025</div>
<svg class="ic" style="left:2431.7px;top:1779.2px;width:30.5px;height:30.5px;" viewBox="0 0 24 24" fill="none" stroke="#888" stroke-width="1.8" stroke-linecap="round" stroke-linejoin="round"><path d="m7 15 5 5 5-5"/><path d="m7 9 5-5 5 5"/></svg>
<div class="b" style="left:2071.5px;top:1875.0px;width:1581.5px;height:625.0px;background:#fff;border:1px solid #f0f1f4;box-sizing:border-box;border-radius:30px;"></div>
<svg class="ic" style="left:2222px;top:1941.2px;width:1362px;height:4px" viewBox="0 0 1362 4"><line x1="0" y1="2" x2="1362" y2="2" stroke="#e4e4e4" stroke-width="2.6" stroke-dasharray="7.5 8.5"/></svg>
<svg class="ic" style="left:2222px;top:2098.0px;width:1362px;height:4px" viewBox="0 0 1362 4"><line x1="0" y1="2" x2="1362" y2="2" stroke="#e4e4e4" stroke-width="2.6" stroke-dasharray="7.5 8.5"/></svg>
<svg class="ic" style="left:2222px;top:2255.0px;width:1362px;height:4px" viewBox="0 0 1362 4"><line x1="0" y1="2" x2="1362" y2="2" stroke="#e4e4e4" stroke-width="2.6" stroke-dasharray="7.5 8.5"/></svg>
<div class="t " style="left:2138.20px;top:1929.50px;font-size:25.00px;line-height:25.00px;font-weight:400;color:#666;letter-spacing:-0.875px;transform:scaleX(0.8457);transform-origin:0 0;">0,1371</div>
<div class="t " style="left:2135.40px;top:2087.80px;font-size:25.00px;line-height:25.00px;font-weight:400;color:#666;letter-spacing:-0.875px;transform:scaleX(0.8958);transform-origin:0 0;">0,1154</div>
<div class="t " style="left:2121.90px;top:2243.90px;font-size:25.00px;line-height:25.00px;font-weight:400;color:#666;letter-spacing:0.056px;transform:scaleX(1.0087);transform-origin:0 0;">0,0936</div>
<svg class="ic" style="left:0;top:0;width:3862px;height:2400px" viewBox="0 0 3862 2400"><path d="M2222.4 2077.5 C2263.60 2029.75 2304.80 1982.00 2346.0 1982.0 C2387.17 1982.00 2428.33 2334.13 2469.5 2349.4 C2510.67 2364.67 2551.83 2372.30 2593.0 2372.3 C2634.20 2372.30 2675.40 2371.60 2716.6 2371.6 C2757.73 2371.60 2798.87 2374.20 2840.0 2374.2 C2881.43 2374.20 2922.87 2262.50 2964.3 2262.5 C3005.37 2262.50 3046.43 2267.00 3087.5 2267.0 C3128.67 2267.00 3169.83 2251.67 3211.0 2250.0 C3252.20 2248.33 3293.40 2247.50 3334.6 2247.5 C3375.80 2247.50 3417.00 2251.43 3458.2 2259.3 C3499.47 2267.18 3540.73 2291.29 3582.0 2315.4" fill="none" stroke="#3d8ef6" stroke-width="3.2"/><circle cx="2222.4" cy="2077.5" r="8.2" fill="#fff" stroke="#3d8ef6" stroke-width="2.8"/><circle cx="2346.0" cy="1982.0" r="8.2" fill="#fff" stroke="#3d8ef6" stroke-width="2.8"/><circle cx="2469.5" cy="2349.4" r="8.2" fill="#fff" stroke="#3d8ef6" stroke-width="2.8"/><circle cx="2593.0" cy="2372.3" r="8.2" fill="#fff" stroke="#3d8ef6" stroke-width="2.8"/><circle cx="2716.6" cy="2371.6" r="8.2" fill="#fff" stroke="#3d8ef6" stroke-width="2.8"/><circle cx="2840.0" cy="2374.2" r="8.2" fill="#fff" stroke="#3d8ef6" stroke-width="2.8"/><circle cx="2964.3" cy="2262.5" r="8.2" fill="#fff" stroke="#3d8ef6" stroke-width="2.8"/><circle cx="3087.5" cy="2267.0" r="8.2" fill="#fff" stroke="#3d8ef6" stroke-width="2.8"/><circle cx="3211.0" cy="2250.0" r="8.2" fill="#fff" stroke="#3d8ef6" stroke-width="2.8"/><circle cx="3334.6" cy="2247.5" r="8.2" fill="#fff" stroke="#3d8ef6" stroke-width="2.8"/><circle cx="3458.2" cy="2259.3" r="8.2" fill="#fff" stroke="#3d8ef6" stroke-width="2.8"/><circle cx="3582.0" cy="2315.4" r="8.2" fill="#fff" stroke="#3d8ef6" stroke-width="2.8"/><circle cx="2222.4" cy="2242.1" r="8.2" fill="#fff" stroke="#1d3fe0" stroke-width="2.8"/></svg>
</body></html>
